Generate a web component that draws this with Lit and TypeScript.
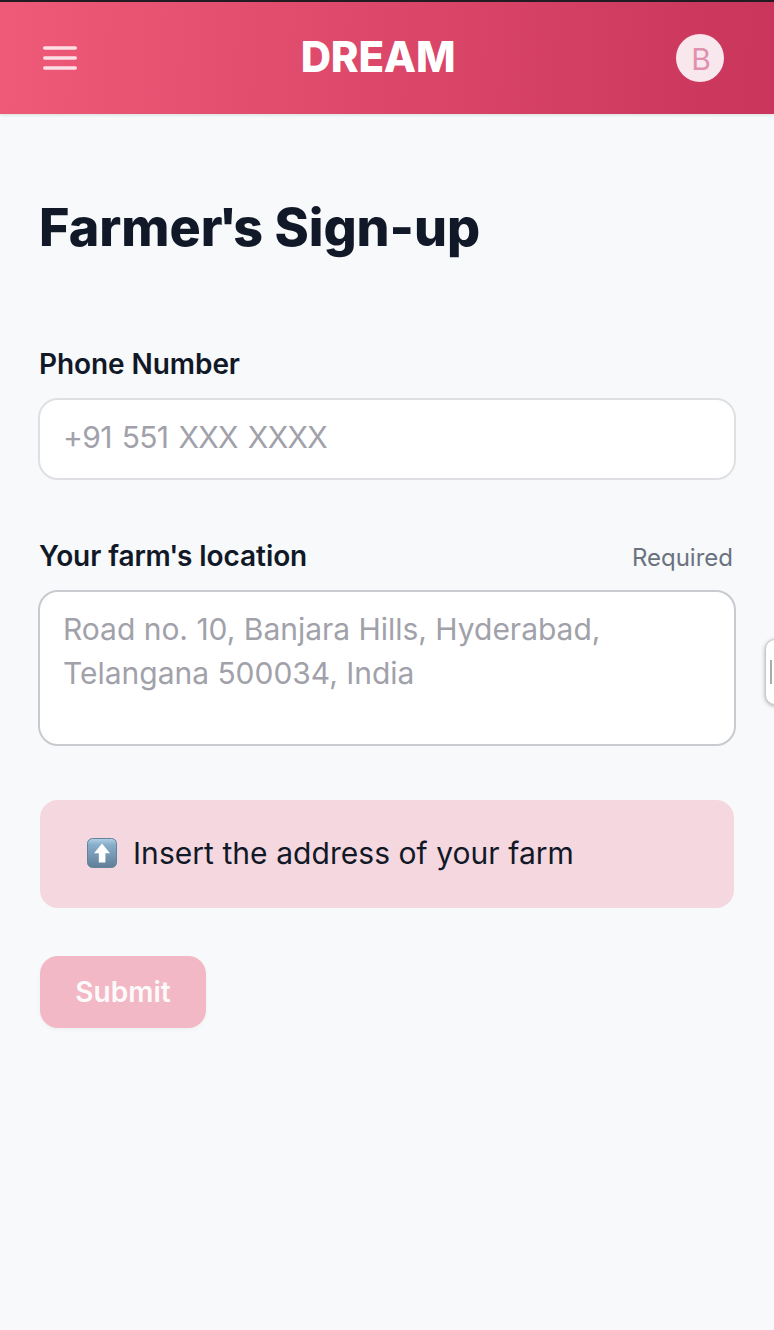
import { LitElement, html, css } from "lit";
import { customElement } from "lit/decorators.js";

@customElement("app-header")
class AppHeader extends LitElement {
  static styles = css`
    :host {
      display: flex;
      align-items: center;
      justify-content: space-between;
      box-sizing: border-box;
      height: 114px;
      padding: 0 50px 0 36px;
      border-top: 2px solid #211c22;
      background: linear-gradient(93deg, #ef5a78, #c9355b) padding-box;
      box-shadow: 0 1px 3px rgba(20, 50, 40, 0.14);
    }
    .menu { display: block; width: 48px; height: 48px; }
    .brand {
      margin: 0 0 2px -4px;
      font-size: 42px;
      line-height: 56px;
      font-weight: 800;
      letter-spacing: -0.2px;
      color: #fff;
    }
    .avatar {
      display: grid;
      place-items: center;
      box-sizing: border-box;
      width: 48px;
      height: 48px;
      padding: 3px 0 0 2px;
      border-radius: 50%;
      background: #f9e7ee;
      color: #e091ae;
      font-size: 30px;
      line-height: 45px;
    }
  `;

  render() {
    return html`
      <svg class="menu" viewBox="0 0 48 48" fill="none" stroke="#fbdfe5" stroke-width="3.4" stroke-linecap="round">
        <path d="M8.7 14H39.3M8.7 24H39.3M8.7 34H39.3" />
      </svg>
      <h1 class="brand">DREAM</h1>
      <div class="avatar">B</div>
    `;
  }
}

@customElement("app-root")
class AppRoot extends LitElement {
  static styles = css`
    :host {
      display: flex;
      flex-direction: column;
      position: relative;
      box-sizing: border-box;
      height: 1330px;
      overflow: hidden;
      background: #f7f9fa;
      color: #111827;
      font-family: Inter, "Liberation Sans", sans-serif;
    }
    .page { padding: 82px 38px 0; }
    .title {
      margin: 0 0 82px 1px;
      font-size: 52px;
      line-height: 64px;
      font-weight: 800;
      letter-spacing: -0.02px;
    }
    .mark { letter-spacing: -0.075em; }
    .label .mark { letter-spacing: -0.045em; }
    .field { display: flex; flex-direction: column; gap: 14px; }
    .phone { margin-bottom: 54px; }
    .place { margin-bottom: 54px; }
    .row {
      display: flex;
      align-items: center;
      justify-content: space-between;
      box-sizing: border-box;
      height: 42px;
      padding: 2px 3px 0 1px;
    }
    .label { font-size: 28px; line-height: 40px; font-weight: 600; letter-spacing: -0.07px; }
    .hint { padding-top: 3px; font-size: 24px; line-height: 36px; color: #6b7280; }
    .control {
      display: block;
      box-sizing: border-box;
      width: 100%;
      margin: 0;
      padding: 15px 23px 17px;
      border: 2px solid #dfe0e4;
      border-radius: 20px;
      outline: none;
      resize: none;
      overflow: hidden;
      background: #fff;
      font: 400 30px/44px Inter, "Liberation Sans", sans-serif;
      color: #111827;
    }
    .control::placeholder { color: #a1a1aa; opacity: 1; }
    .phone .control { height: 82px; padding: 15px 23px 19px; letter-spacing: -0.65px; word-spacing: 2.2px; }
    .place .control { height: 156px; border-color: #c9cacf; letter-spacing: -0.02px; }
    .notice {
      display: flex;
      align-items: center;
      gap: 16px;
      box-sizing: border-box;
      height: 108px;
      margin: 0 2px 48px;
      padding: 0 47px 2px;
      border-radius: 18px;
      background: #f5d7df;
      font-size: 30px;
      line-height: 44px;
      letter-spacing: 0.05px;
    }
    .up { display: block; flex: none; width: 30px; height: 30px; }
    .submit {
      display: block;
      width: 166px;
      height: 72px;
      margin: 0 0 0 2px;
      padding: 0;
      border: 0;
      border-radius: 18px;
      background: #f2b8c5;
      box-shadow: 0 2px 4px rgba(17, 24, 39, 0.04);
      color: #fdfafb;
      font: 600 28px/40px Inter, "Liberation Sans", sans-serif;
    }
    .tab {
      position: absolute;
      top: 639px;
      right: -20px;
      display: flex;
      align-items: center;
      box-sizing: border-box;
      width: 29px;
      height: 66px;
      padding-left: 4px;
      border: 1px solid #c4c6c8;
      border-radius: 10px;
      background: #fff;
      box-shadow: 0 1px 4px rgba(0, 0, 0, 0.3);
    }
    .grip { width: 2px; height: 24px; background: #ababab; }
  `;

  render() {
    return html`
      <app-header></app-header>
      <main class="page">
        <h2 class="title">Farme<span class="mark">r'</span>s Sign-up</h2>
        <div class="field phone">
          <div class="row"><label class="label" for="phone">Phone Number</label></div>
          <input class="control" id="phone" type="tel" placeholder="+91 551 XXX XXXX" />
        </div>
        <div class="field place">
          <div class="row">
            <label class="label" for="place">Your far<span class="mark">m'</span>s location</label>
            <span class="hint">Required</span>
          </div>
          <textarea class="control" id="place" placeholder="Road no. 10, Banjara Hills, Hyderabad, Telangana 500034, India"></textarea>
        </div>
        <div class="notice">
          <svg class="up" viewBox="0 0 30 30">
            <defs>
              <linearGradient id="face" x1="0" y1="0" x2="0" y2="1">
                <stop offset="0" stop-color="#b4d0e5" />
                <stop offset="0.22" stop-color="#86aeca" />
                <stop offset="0.6" stop-color="#7597b2" />
                <stop offset="1" stop-color="#5f7d96" />
              </linearGradient>
            </defs>
            <rect x="0.5" y="0.5" width="29" height="29" rx="5" fill="url(#face)" stroke="#64829d" />
            <path d="M15 5.5L23 15.2H18.4V24.6H11.8V15.2H7Z" fill="#fff" />
          </svg>
          <span>Insert the address of your farm</span>
        </div>
        <button class="submit" type="button">Submit</button>
      </main>
      <div class="tab"><div class="grip"></div></div>
    `;
  }
}
